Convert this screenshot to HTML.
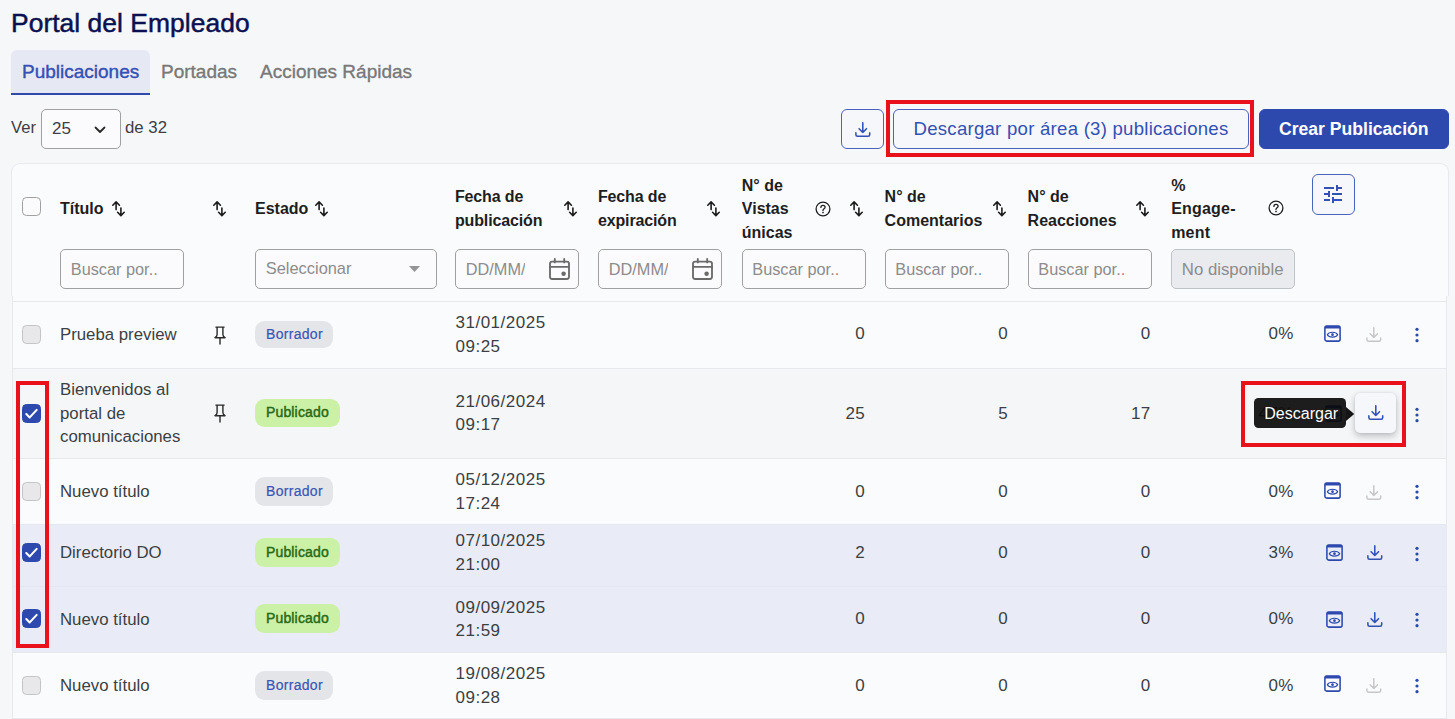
<!DOCTYPE html>
<html lang="es">
<head>
<meta charset="utf-8">
<title>Portal del Empleado</title>
<style>
*{box-sizing:border-box;margin:0;padding:0}
html,body{width:1455px;height:719px;overflow:hidden;background:#f5f7f9}
body{font-family:"Liberation Sans",sans-serif;color:#3c3f43;position:relative}
h1{position:absolute;left:11px;top:4.600px;font-size:26.4px;font-weight:400;color:#0b1150;line-height:36px;white-space:nowrap;-webkit-text-stroke:.5px #0b1150;letter-spacing:.05px}
.tab{position:absolute;top:50px;height:45px;line-height:44px;font-size:19px;color:#787878;white-space:nowrap;-webkit-text-stroke:.35px #787878}
.tab.on{left:11px;width:139px;background:#e6e8f4;border-bottom:2px solid #2f49ad;border-radius:6px 6px 0 0;color:#3350b4;padding-left:11px;-webkit-text-stroke:.4px #3350b4}
.txt{position:absolute;font-size:16.6px;line-height:20px;white-space:nowrap;color:#3c3f43}
.sel{position:absolute;left:41px;top:109px;width:80px;height:40px;border:1px solid #a0a0a0;border-radius:5px;background:#fbfbfd}
.btn{position:absolute;top:109px;height:40px;border-radius:6px;border:1px solid #4a63bb;background:#f6f7fa;color:#3350b4;font-size:18.6px;letter-spacing:.25px;line-height:38px;text-align:center;white-space:nowrap}
.btn.pri{background:#2e49ad;border-color:#2e49ad;color:#fff;font-weight:700;font-size:17.6px;letter-spacing:0}
.red{position:absolute;border:4px solid #e9111c}
.card{position:absolute;left:11px;top:163px;width:1438px;height:133px;background:#fafbfd;border:1px solid #e7e9ed;border-bottom:0;border-radius:9px 9px 0 0}
.card2{position:absolute;left:12px;top:296px;width:1435px;height:440px;background:#fafbfd;border:1px solid #e7e9ed;border-top:0}
.row{position:absolute;left:13px;width:1433px;border-top:1px solid #e6e8ec}
.row.s{background:#e9ecf6;border-top-color:#e4e7f1}
.row.hv{background:#f5f6f8}
.th{position:absolute;font-size:16px;font-weight:700;line-height:23.5px;color:#1e1e1e;white-space:nowrap}
.inp{position:absolute;top:249px;height:40px;width:124px;border:1px solid #a0a0a0;border-radius:5px;background:#fbfbfd;font-size:16.300px;line-height:39px;padding-left:9.8px;color:#8c8c8c;white-space:nowrap;overflow:hidden}
.inp.dis{background:#e9ebee;border-color:#bfc2c7;color:#8c8c8c;font-size:16.8px}
.cb{position:absolute;left:22px;width:19px;height:19px;border:1px solid #c4c4c6;border-radius:4.5px;background:#e8e8eb}
.cb.h{background:#fbfbfd;border-color:#a0a0a0}
.cb.on{background:#2e49ad;border-color:#2e49ad}
.cb svg{position:absolute;left:-1px;top:-1px}
.t{position:absolute;left:60px;font-size:16.8px;line-height:23.5px;color:#3c3f43;white-space:nowrap}
.d{position:absolute;left:455.500px;font-size:17px;letter-spacing:.5px;line-height:23.6px;color:#3c3f43;white-space:nowrap}
.n{position:absolute;font-size:17px;letter-spacing:.4px;line-height:24px;color:#3c3f43;text-align:right;white-space:nowrap;width:80px}
.bd{position:absolute;left:255px;height:27.5px;border-radius:9.5px;font-size:14px;letter-spacing:.3px;line-height:27.5px;padding-left:11px;white-space:nowrap}
.bd.b{width:78.3px;background:#e4e5e9;color:#3a55b6;-webkit-text-stroke:.2px #3a55b6}
.bd.p{width:85px;background:#cbf1a7;color:#2a6915;font-size:14px;letter-spacing:.15px;-webkit-text-stroke:.45px #2a6915}
svg{position:absolute;overflow:visible}
</style>
</head>
<body>
<h1>Portal del Empleado</h1>
<div class="tab on">Publicaciones</div>
<div class="tab" style="left:161px">Portadas</div>
<div class="tab" style="left:260px">Acciones Rápidas</div>
<div class="txt" style="left:11px;top:118.400px">Ver</div>
<div class="sel"><div class="txt" style="left:10px;top:9.400px;font-size:17px">25</div><svg style="left:52px;top:16px" width="12" height="8" viewBox="0 0 12 8"><path d="M1.500 1.500 6 6l4.500-4.500" fill="none" stroke="#2a2a2a" stroke-width="1.800" stroke-linecap="round" stroke-linejoin="round"/></svg></div>
<div class="txt" style="left:125px;top:118.400px;font-size:16.8px">de 32</div>
<div class="btn" style="left:841px;width:43px"></div>
<svg style="left:854.50px;top:121.90px" width="15.600" height="15" viewBox="0 0 16 15" preserveAspectRatio="none"><path d="M8 .8v9.600M4.200 6.700 8 10.500l3.800-3.800M.9 10.900v1.600q0 1.700 1.700 1.700h10.800q1.700 0 1.700-1.700V10.900" fill="none" stroke="#3350b4" stroke-width="1.6" stroke-linecap="round" stroke-linejoin="round"/></svg>
<div class="red" style="left:886px;top:100px;width:368px;height:57px"></div>
<div class="btn" style="left:893px;width:356px">Descargar por área (3) publicaciones</div>
<div class="btn pri" style="left:1258.5px;width:190.5px">Crear Publicación</div>
<div class="card"></div><div class="card2"></div>
<div class="row " style="top:301px;height:67px"></div>
<div class="row hv" style="top:368px;height:90px"></div>
<div class="row " style="top:458px;height:66px"></div>
<div class="row s" style="top:524px;height:62px"></div>
<div class="row s" style="top:586px;height:66px"></div>
<div class="row " style="top:652px;height:66px"></div>
<div class="row " style="top:718px;height:10px"></div>
<div class="cb h" style="top:196.500px;left:21.500px"></div>
<div class="th" style="left:60px;top:197.200px">Título</div><svg style="left:111.6px;top:201.3px" width="13" height="15" viewBox="0 0 13 15"><path d="M4.1 8.6V.9M.8 4.2 4.1.9l3.3 3.3M8.9 7v7.6M5.6 11.3l3.3 3.3 3.3-3.3" fill="none" stroke="#1c1c1c" stroke-width="1.600" stroke-linecap="round" stroke-linejoin="round"/></svg>
<svg style="left:213.0px;top:201.3px" width="13" height="15" viewBox="0 0 13 15"><path d="M4.1 8.6V.9M.8 4.2 4.1.9l3.3 3.3M8.9 7v7.6M5.6 11.3l3.3 3.3 3.3-3.3" fill="none" stroke="#1c1c1c" stroke-width="1.600" stroke-linecap="round" stroke-linejoin="round"/></svg>
<div class="th" style="left:255px;top:197.200px">Estado</div><svg style="left:315.4px;top:201.3px" width="13" height="15" viewBox="0 0 13 15"><path d="M4.1 8.6V.9M.8 4.2 4.1.9l3.3 3.3M8.9 7v7.6M5.6 11.3l3.3 3.3 3.3-3.3" fill="none" stroke="#1c1c1c" stroke-width="1.600" stroke-linecap="round" stroke-linejoin="round"/></svg>
<div class="th" style="left:455px;top:185.300px;letter-spacing:-.15px">Fecha de<br>publicación</div><svg style="left:563.9px;top:201.3px" width="13" height="15" viewBox="0 0 13 15"><path d="M4.1 8.6V.9M.8 4.2 4.1.9l3.3 3.3M8.9 7v7.6M5.6 11.3l3.3 3.3 3.3-3.3" fill="none" stroke="#1c1c1c" stroke-width="1.600" stroke-linecap="round" stroke-linejoin="round"/></svg>
<div class="th" style="left:598px;top:185.300px;letter-spacing:-.15px">Fecha de<br>expiración</div><svg style="left:706.8px;top:201.3px" width="13" height="15" viewBox="0 0 13 15"><path d="M4.1 8.6V.9M.8 4.2 4.1.9l3.3 3.3M8.9 7v7.6M5.6 11.3l3.3 3.3 3.3-3.3" fill="none" stroke="#1c1c1c" stroke-width="1.600" stroke-linecap="round" stroke-linejoin="round"/></svg>
<div class="th" style="left:741.800px;top:173.500px">N° de<br>Vistas<br>únicas</div><svg style="left:814.8px;top:200.5px" width="16" height="16" viewBox="0 0 16 16"><circle cx="8" cy="8" r="6.9" fill="none" stroke="#1e1e1e" stroke-width="1.3"/><path d="M5.9 6.4c0-1.2.9-2 2.1-2s2.1.8 2.1 1.9c0 1.500-2.100 1.500-2.100 3.200" fill="none" stroke="#1e1e1e" stroke-width="1.3" stroke-linecap="round"/><circle cx="8" cy="11.5" r=".85" fill="#1e1e1e"/></svg><svg style="left:849.9px;top:201.3px" width="13" height="15" viewBox="0 0 13 15"><path d="M4.1 8.6V.9M.8 4.2 4.1.9l3.3 3.3M8.9 7v7.6M5.6 11.3l3.3 3.3 3.3-3.3" fill="none" stroke="#1c1c1c" stroke-width="1.600" stroke-linecap="round" stroke-linejoin="round"/></svg>
<div class="th" style="left:884.600px;top:185.300px">N° de<br>Comentarios</div><svg style="left:992.9px;top:201.3px" width="13" height="15" viewBox="0 0 13 15"><path d="M4.1 8.6V.9M.8 4.2 4.1.9l3.3 3.3M8.9 7v7.6M5.6 11.3l3.3 3.3 3.3-3.3" fill="none" stroke="#1c1c1c" stroke-width="1.600" stroke-linecap="round" stroke-linejoin="round"/></svg>
<div class="th" style="left:1027.600px;top:185.300px">N° de<br>Reacciones</div><svg style="left:1135.9px;top:201.3px" width="13" height="15" viewBox="0 0 13 15"><path d="M4.1 8.6V.9M.8 4.2 4.1.9l3.3 3.3M8.9 7v7.6M5.6 11.3l3.3 3.3 3.3-3.3" fill="none" stroke="#1c1c1c" stroke-width="1.600" stroke-linecap="round" stroke-linejoin="round"/></svg>
<div class="th" style="left:1171.200px;top:173.500px;letter-spacing:.2px">%<br>Engage-<br>ment</div><svg style="left:1267.7px;top:200px" width="16" height="16" viewBox="0 0 16 16"><circle cx="8" cy="8" r="6.9" fill="none" stroke="#1e1e1e" stroke-width="1.3"/><path d="M5.9 6.4c0-1.2.9-2 2.1-2s2.1.8 2.1 1.9c0 1.500-2.100 1.500-2.100 3.200" fill="none" stroke="#1e1e1e" stroke-width="1.3" stroke-linecap="round"/><circle cx="8" cy="11.5" r=".85" fill="#1e1e1e"/></svg>
<div class="btn" style="left:1312px;top:174px;width:43px;height:41px"></div><svg style="left:1320.900px;top:182.050px" width="24" height="24" viewBox="0 0 24 24"><path d="M3 17v2h6v-2H3zM3 5v2h10V5H3zm10 16v-2h8v-2h-8v-2h-2v6h2zM7 9v2H3v2h4v2h2V9H7zm14 4v-2H11v2h10zm-6-4h2V7h4V5h-4V3h-2v6z" fill="#3350b4"/></svg>
<div class="inp" style="left:60px">Buscar por..</div>
<div class="inp" style="left:255px;width:182px;font-size:16.400px;line-height:36.400px">Seleccionar<svg style="left:152.800px;top:16.300px" width="11" height="6" viewBox="0 0 11 6"><path d="M0 0h11L5.500 6z" fill="#959595"/></svg></div>
<div class="inp" style="left:455px"><span style="display:inline-block;width:59.500px;overflow:hidden;vertical-align:top">DD/MM/</span></div><svg style="left:548.7px;top:258px" width="21" height="22" viewBox="0 0 21 22"><rect x="1" y="3.600" width="19" height="17.400" rx="2.200" fill="none" stroke="#6a6a6a" stroke-width="1.850"/><path d="M1 8.800h19M5.800 .8v3.600M15.200 .8v3.600" fill="none" stroke="#6a6a6a" stroke-width="1.850" stroke-linecap="round"/><circle cx="14.600" cy="15.700" r="2.250" fill="#6a6a6a"/></svg>
<div class="inp" style="left:598px"><span style="display:inline-block;width:59.500px;overflow:hidden;vertical-align:top">DD/MM/</span></div><svg style="left:691.7px;top:258px" width="21" height="22" viewBox="0 0 21 22"><rect x="1" y="3.600" width="19" height="17.400" rx="2.200" fill="none" stroke="#6a6a6a" stroke-width="1.850"/><path d="M1 8.800h19M5.800 .8v3.600M15.200 .8v3.600" fill="none" stroke="#6a6a6a" stroke-width="1.850" stroke-linecap="round"/><circle cx="14.600" cy="15.700" r="2.250" fill="#6a6a6a"/></svg>
<div class="inp" style="left:741.500px">Buscar por..</div>
<div class="inp" style="left:884.500px">Buscar por..</div>
<div class="inp" style="left:1027.500px">Buscar por..</div>
<div class="inp dis" style="left:1171px;width:123.500px">No disponible</div>
<div class="cb" style="top:325.25px"></div>
<div class="t" style="top:323.45px">Prueba preview</div>
<svg style="left:213.7px;top:326.05px" width="12" height="19" viewBox="0 0 12 19"><path d="M1.900 1.100H10.100M3.100 1.100V8.400Q3.100 10.300 1 11.700H11Q8.900 10.300 8.900 8.400V1.100M6 11.700V18" fill="none" stroke="#2a2a2a" stroke-width="1.400" stroke-linecap="round" stroke-linejoin="round"/></svg>
<div class="bd b" style="top:320.7px;height:27.6px;line-height:27.0px">Borrador</div>
<div class="d" style="top:311.15px">31/01/2025<br>09:25</div>
<div class="n" style="left:785.20px;top:322.35px">0</div>
<div class="n" style="left:928.00px;top:322.35px">0</div>
<div class="n" style="left:1070.70px;top:322.35px">0</div>
<div class="n" style="left:1213.80px;top:322.35px">0%</div>
<svg style="left:1323.80px;top:325.10px" width="17" height="17" viewBox="0 0 17 17"><rect x=".9" y=".9" width="15.200" height="15.200" rx="1.800" fill="none" stroke="#2e49ad" stroke-width="1.550"/><rect x=".9" y=".9" width="15.200" height="2.600" fill="#2e49ad"/><path d="M3.300 9.700C5 6.500 12 6.500 13.700 9.700C12 12.900 5 12.900 3.300 9.700Z" fill="none" stroke="#2e49ad" stroke-width="1.100"/><circle cx="8.500" cy="9.700" r="1.350" fill="#2e49ad"/></svg>
<svg style="left:1366.20px;top:327.25px" width="15.600" height="15" viewBox="0 0 16 15" preserveAspectRatio="none"><path d="M8 .8v9.600M4.200 6.700 8 10.500l3.800-3.800M.9 10.900v1.600q0 1.700 1.700 1.700h10.800q1.700 0 1.700-1.700V10.900" fill="none" stroke="#c6c6c8" stroke-width="1.5" stroke-linecap="round" stroke-linejoin="round"/></svg>
<svg style="left:1414.70px;top:326.70px" width="4" height="16" viewBox="0 0 4 16"><circle cx="2" cy="2.300" r="1.600" fill="#2e49ad"/><circle cx="2" cy="8" r="1.600" fill="#2e49ad"/><circle cx="2" cy="13.700" r="1.600" fill="#2e49ad"/></svg>
<div class="cb on" style="top:403.60px"><svg width="19" height="19" viewBox="0 0 19 19"><path d="M4.300 10.100 7.700 13.400 14.700 5.900" fill="none" stroke="#fff" stroke-width="2.100" stroke-linecap="round" stroke-linejoin="round"/></svg></div>
<div class="t" style="top:378.30px">Bienvenidos al<br>portal de<br>comunicaciones</div>
<svg style="left:213.7px;top:404.40000000000003px" width="12" height="19" viewBox="0 0 12 19"><path d="M1.900 1.100H10.100M3.100 1.100V8.400Q3.100 10.300 1 11.700H11Q8.900 10.300 8.900 8.400V1.100M6 11.700V18" fill="none" stroke="#2a2a2a" stroke-width="1.400" stroke-linecap="round" stroke-linejoin="round"/></svg>
<div class="bd p" style="top:399.2px;height:28.3px;line-height:27.7px">Publicado</div>
<div class="d" style="top:389.50px">21/06/2024<br>09:17</div>
<div class="n" style="left:785.20px;top:401.50px">25</div>
<div class="n" style="left:928.00px;top:401.50px">5</div>
<div class="n" style="left:1070.70px;top:401.50px">17</div>
<div class="n" style="left:1213.80px;top:401.50px">47%</div>
<svg style="left:1325.00px;top:404.90px" width="17" height="17" viewBox="0 0 17 17"><rect x=".9" y=".9" width="15.200" height="15.200" rx="1.800" fill="none" stroke="#2e49ad" stroke-width="1.550"/><rect x=".9" y=".9" width="15.200" height="2.600" fill="#2e49ad"/><path d="M3.300 9.700C5 6.500 12 6.500 13.700 9.700C12 12.900 5 12.900 3.300 9.700Z" fill="none" stroke="#2e49ad" stroke-width="1.100"/><circle cx="8.500" cy="9.700" r="1.350" fill="#2e49ad"/></svg>
<div style="position:absolute;left:1254px;top:398px;width:92px;height:30px;border-radius:4.500px;background:rgba(10,10,10,.92);color:#fff;font-size:16px;line-height:32.500px;padding-left:10.300px;white-space:nowrap;overflow:hidden">Descargar</div>
<svg style="left:1346.200px;top:407px" width="8.400" height="14" viewBox="0 0 8.400 14"><path d="M0 0 8.200 7 0 14z" fill="#151515"/></svg>
<div style="position:absolute;left:1355px;top:393.200px;width:41px;height:40.200px;border-radius:5px;background:#f6f7fa;box-shadow:0 3px 7px rgba(0,0,0,.24),0 0 2px rgba(0,0,0,.1)"></div>
<svg style="left:1367.50px;top:405.40px" width="15.600" height="15" viewBox="0 0 16 15" preserveAspectRatio="none"><path d="M8 .8v9.600M4.200 6.700 8 10.500l3.800-3.800M.9 10.900v1.600q0 1.700 1.700 1.700h10.800q1.700 0 1.700-1.700V10.900" fill="none" stroke="#3350b4" stroke-width="1.6" stroke-linecap="round" stroke-linejoin="round"/></svg>
<svg style="left:1414.70px;top:406.70px" width="4" height="16" viewBox="0 0 4 16"><circle cx="2" cy="2.300" r="1.600" fill="#2e49ad"/><circle cx="2" cy="8" r="1.600" fill="#2e49ad"/><circle cx="2" cy="13.700" r="1.600" fill="#2e49ad"/></svg>
<div class="red" style="left:1241px;top:381px;width:165px;height:66px"></div>
<div class="cb" style="top:481.70px"></div>
<div class="t" style="top:479.90px">Nuevo título</div>
<div class="bd b" style="top:477.2px;height:29px;line-height:28.4px">Borrador</div>
<div class="d" style="top:468.20px">05/12/2025<br>17:24</div>
<div class="n" style="left:785.20px;top:479.60px">0</div>
<div class="n" style="left:928.00px;top:479.60px">0</div>
<div class="n" style="left:1070.70px;top:479.60px">0</div>
<div class="n" style="left:1213.80px;top:479.60px">0%</div>
<svg style="left:1323.80px;top:481.70px" width="17" height="17" viewBox="0 0 17 17"><rect x=".9" y=".9" width="15.200" height="15.200" rx="1.800" fill="none" stroke="#2e49ad" stroke-width="1.550"/><rect x=".9" y=".9" width="15.200" height="2.600" fill="#2e49ad"/><path d="M3.300 9.700C5 6.500 12 6.500 13.700 9.700C12 12.900 5 12.900 3.300 9.700Z" fill="none" stroke="#2e49ad" stroke-width="1.100"/><circle cx="8.500" cy="9.700" r="1.350" fill="#2e49ad"/></svg>
<svg style="left:1366.10px;top:484.90px" width="15.600" height="15" viewBox="0 0 16 15" preserveAspectRatio="none"><path d="M8 .8v9.600M4.200 6.700 8 10.500l3.800-3.800M.9 10.900v1.600q0 1.700 1.700 1.700h10.800q1.700 0 1.700-1.700V10.900" fill="none" stroke="#c6c6c8" stroke-width="1.5" stroke-linecap="round" stroke-linejoin="round"/></svg>
<svg style="left:1414.70px;top:484.20px" width="4" height="16" viewBox="0 0 4 16"><circle cx="2" cy="2.300" r="1.600" fill="#2e49ad"/><circle cx="2" cy="8" r="1.600" fill="#2e49ad"/><circle cx="2" cy="13.700" r="1.600" fill="#2e49ad"/></svg>
<div class="cb on" style="top:542.80px"><svg width="19" height="19" viewBox="0 0 19 19"><path d="M4.300 10.100 7.700 13.400 14.700 5.900" fill="none" stroke="#fff" stroke-width="2.100" stroke-linecap="round" stroke-linejoin="round"/></svg></div>
<div class="t" style="top:541.00px">Directorio DO</div>
<div class="bd p" style="top:537.7px;height:29.2px;line-height:28.6px">Publicado</div>
<div class="d" style="top:529.30px">07/10/2025<br>21:00</div>
<div class="n" style="left:785.20px;top:540.70px">2</div>
<div class="n" style="left:928.00px;top:540.70px">0</div>
<div class="n" style="left:1070.70px;top:540.70px">0</div>
<div class="n" style="left:1213.80px;top:540.70px">3%</div>
<svg style="left:1326.00px;top:544.10px" width="17" height="17" viewBox="0 0 17 17"><rect x=".9" y=".9" width="15.200" height="15.200" rx="1.800" fill="none" stroke="#2e49ad" stroke-width="1.550"/><rect x=".9" y=".9" width="15.200" height="2.600" fill="#2e49ad"/><path d="M3.300 9.700C5 6.500 12 6.500 13.700 9.700C12 12.900 5 12.900 3.300 9.700Z" fill="none" stroke="#2e49ad" stroke-width="1.100"/><circle cx="8.500" cy="9.700" r="1.350" fill="#2e49ad"/></svg>
<svg style="left:1367.30px;top:545.40px" width="15.600" height="15" viewBox="0 0 16 15" preserveAspectRatio="none"><path d="M8 .8v9.600M4.200 6.700 8 10.500l3.800-3.800M.9 10.900v1.600q0 1.700 1.700 1.700h10.800q1.700 0 1.700-1.700V10.900" fill="none" stroke="#3350b4" stroke-width="1.6" stroke-linecap="round" stroke-linejoin="round"/></svg>
<svg style="left:1414.70px;top:545.60px" width="4" height="16" viewBox="0 0 4 16"><circle cx="2" cy="2.300" r="1.600" fill="#2e49ad"/><circle cx="2" cy="8" r="1.600" fill="#2e49ad"/><circle cx="2" cy="13.700" r="1.600" fill="#2e49ad"/></svg>
<div class="cb on" style="top:609.40px"><svg width="19" height="19" viewBox="0 0 19 19"><path d="M4.300 10.100 7.700 13.400 14.700 5.900" fill="none" stroke="#fff" stroke-width="2.100" stroke-linecap="round" stroke-linejoin="round"/></svg></div>
<div class="t" style="top:607.60px">Nuevo título</div>
<div class="bd p" style="top:604.2px;height:29.2px;line-height:28.6px">Publicado</div>
<div class="d" style="top:595.90px">09/09/2025<br>21:59</div>
<div class="n" style="left:785.20px;top:607.30px">0</div>
<div class="n" style="left:928.00px;top:607.30px">0</div>
<div class="n" style="left:1070.70px;top:607.30px">0</div>
<div class="n" style="left:1213.80px;top:607.30px">0%</div>
<svg style="left:1326.00px;top:610.80px" width="17" height="17" viewBox="0 0 17 17"><rect x=".9" y=".9" width="15.200" height="15.200" rx="1.800" fill="none" stroke="#2e49ad" stroke-width="1.550"/><rect x=".9" y=".9" width="15.200" height="2.600" fill="#2e49ad"/><path d="M3.300 9.700C5 6.500 12 6.500 13.700 9.700C12 12.900 5 12.900 3.300 9.700Z" fill="none" stroke="#2e49ad" stroke-width="1.100"/><circle cx="8.500" cy="9.700" r="1.350" fill="#2e49ad"/></svg>
<svg style="left:1367.30px;top:612.00px" width="15.600" height="15" viewBox="0 0 16 15" preserveAspectRatio="none"><path d="M8 .8v9.600M4.200 6.700 8 10.500l3.800-3.800M.9 10.900v1.600q0 1.700 1.700 1.700h10.800q1.700 0 1.700-1.700V10.900" fill="none" stroke="#3350b4" stroke-width="1.6" stroke-linecap="round" stroke-linejoin="round"/></svg>
<svg style="left:1414.70px;top:612.20px" width="4" height="16" viewBox="0 0 4 16"><circle cx="2" cy="2.300" r="1.600" fill="#2e49ad"/><circle cx="2" cy="8" r="1.600" fill="#2e49ad"/><circle cx="2" cy="13.700" r="1.600" fill="#2e49ad"/></svg>
<div class="cb" style="top:675.80px"></div>
<div class="t" style="top:674.00px">Nuevo título</div>
<div class="bd b" style="top:670.8px;height:29.2px;line-height:28.6px">Borrador</div>
<div class="d" style="top:662.30px">19/08/2025<br>09:28</div>
<div class="n" style="left:785.20px;top:673.70px">0</div>
<div class="n" style="left:928.00px;top:673.70px">0</div>
<div class="n" style="left:1070.70px;top:673.70px">0</div>
<div class="n" style="left:1213.80px;top:673.70px">0%</div>
<svg style="left:1323.80px;top:675.30px" width="17" height="17" viewBox="0 0 17 17"><rect x=".9" y=".9" width="15.200" height="15.200" rx="1.800" fill="none" stroke="#2e49ad" stroke-width="1.550"/><rect x=".9" y=".9" width="15.200" height="2.600" fill="#2e49ad"/><path d="M3.300 9.700C5 6.500 12 6.500 13.700 9.700C12 12.900 5 12.900 3.300 9.700Z" fill="none" stroke="#2e49ad" stroke-width="1.100"/><circle cx="8.500" cy="9.700" r="1.350" fill="#2e49ad"/></svg>
<svg style="left:1366.10px;top:678.35px" width="15.600" height="15" viewBox="0 0 16 15" preserveAspectRatio="none"><path d="M8 .8v9.600M4.200 6.700 8 10.500l3.800-3.800M.9 10.900v1.600q0 1.700 1.700 1.700h10.800q1.700 0 1.700-1.700V10.900" fill="none" stroke="#c6c6c8" stroke-width="1.5" stroke-linecap="round" stroke-linejoin="round"/></svg>
<svg style="left:1414.70px;top:677.80px" width="4" height="16" viewBox="0 0 4 16"><circle cx="2" cy="2.300" r="1.600" fill="#2e49ad"/><circle cx="2" cy="8" r="1.600" fill="#2e49ad"/><circle cx="2" cy="13.700" r="1.600" fill="#2e49ad"/></svg>
<div class="red" style="left:16px;top:381px;width:33px;height:267px"></div>
</body>
</html>
